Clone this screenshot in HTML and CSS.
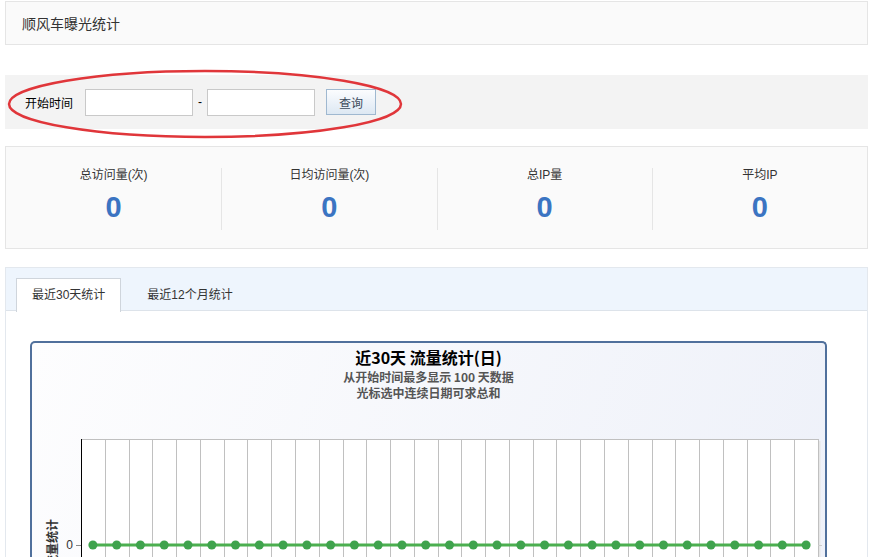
FILE: index.html
```html
<!DOCTYPE html>
<html lang="zh-CN">
<head>
    <meta charset="UTF-8">
    <meta name="viewport" content="width=device-width, initial-scale=1.0">
    <title>顺风车曝光统计</title>
    <link rel="stylesheet" href="styles.css">
</head>
<body>
    <div class="wrap">
        <section class="box-head">
            <h1 class="head-title">顺风车曝光统计</h1>
        </section>

        <section class="search-bar">
            <label class="search-label">开始时间</label>
            <input class="date-input" type="text">
            <span class="dash">-</span>
            <input class="date-input" type="text">
            <button class="btn-search" type="button">查询</button>
            <svg class="mark" width="400" height="72" viewBox="0 0 400 72">
                <ellipse cx="199" cy="35" rx="196" ry="33" fill="none" stroke="#e0363a" stroke-width="2.5"/>
            </svg>
        </section>

        <section class="stats">
            <div class="stat-item">
                <p class="stat-label">总访问量(次)</p>
                <p class="stat-num">0</p>
            </div>
            <div class="stat-item">
                <p class="stat-label">日均访问量(次)</p>
                <p class="stat-num">0</p>
            </div>
            <div class="stat-item">
                <p class="stat-label">总IP量</p>
                <p class="stat-num">0</p>
            </div>
            <div class="stat-item">
                <p class="stat-label">平均IP</p>
                <p class="stat-num">0</p>
            </div>
        </section>

        <section class="tab-panel">
            <ul class="tab-list">
                <li class="tab active">最近30天统计</li>
                <li class="tab">最近12个月统计</li>
            </ul>
            <div class="tab-body">
                <div class="chart-box">
                    <h2 class="chart-title">近30天 流量统计(日)</h2>
                    <p class="chart-sub">从开始时间最多显示 100 天数据</p>
                    <p class="chart-sub">光标选中连续日期可求总和</p>
                    <svg id="chart" class="chart" width="793" height="200"></svg>
                </div>
            </div>
        </section>
    </div>

    <script>
        const svg = document.querySelector("#chart");
        const ns = "http://www.w3.org/2000/svg";
        const plotLeft = 49;
        const plotRight = 786;
        const plotTop = 38;
        const zeroY = 144;
        const count = 31;
        const step = (plotRight - plotLeft) / count;

        function add(tag, attrs) {
            const el = document.createElementNS(ns, tag);
            for (const key in attrs) {
                el.setAttribute(key, attrs[key]);
            }
            svg.appendChild(el);
            return el;
        }

        add("rect", { x: plotLeft, y: plotTop, width: plotRight - plotLeft, height: 200, fill: "#fff" });
        add("line", { x1: plotRight + 1.5, y1: plotTop + 2, x2: plotRight + 1.5, y2: 200, stroke: "#e6e6e6", "stroke-width": 2 });

        for (let i = 1; i < count; i++) {
            const x = Math.round(plotLeft + i * step) + 0.5;
            add("line", { x1: x, y1: plotTop, x2: x, y2: 200, stroke: "#c0c0c0" });
        }

        add("line", { x1: plotLeft, y1: plotTop + 0.5, x2: plotRight, y2: plotTop + 0.5, stroke: "#c0c0c0" });
        add("line", { x1: plotRight + 0.5, y1: plotTop, x2: plotRight + 0.5, y2: 200, stroke: "#c0c0c0" });
        add("line", { x1: plotLeft + 0.5, y1: plotTop, x2: plotLeft + 0.5, y2: 200, stroke: "#000" });
        add("line", { x1: plotLeft - 5, y1: zeroY + 0.5, x2: plotLeft, y2: zeroY + 0.5, stroke: "#888" });
        add("line", { x1: plotRight, y1: zeroY + 0.5, x2: plotRight + 4, y2: zeroY + 0.5, stroke: "#ccc" });

        const zero = add("text", { x: 41, y: zeroY + 4, "text-anchor": "end", class: "axis-text" });
        zero.textContent = "0";
        const yTitle = add("text", { x: 0, y: 0, "text-anchor": "middle", class: "axis-title", transform: "translate(25 142) rotate(-90)" });
        yTitle.textContent = "流量统计";

        const points = [];
        for (let i = 0; i < count; i++) {
            points.push((plotLeft + (i + 0.5) * step).toFixed(1) + "," + zeroY);
        }
        add("polyline", { points: points.join(" "), fill: "none", stroke: "#4caf50", "stroke-width": 3 });
        points.forEach((p) => {
            const [x, y] = p.split(",");
            add("circle", { cx: x, cy: y, r: 4.5, fill: "#3fa34d" });
        });
    </script>
</body>
</html>
```

FILE: styles.css
```css
body {
    margin: 0;
    background-color: #fff;
    font-family: "Liberation Sans", "Noto Sans CJK SC", sans-serif;
    font-size: 12px;
    color: #333;
}

p, h1, h2, ul {
    margin: 0;
    padding: 0;
}

.wrap {
    width: 863px;
    padding: 1px 0 0 5px;
}

.box-head {
    height: 42px;
    background-color: #fafafa;
    border: 1px solid #e5e5e5;
}

.head-title {
    padding-left: 16px;
    font-size: 14px;
    font-weight: normal;
    line-height: 44px;
    color: #333;
}

.search-bar {
    position: relative;
    display: flex;
    align-items: center;
    height: 54px;
    margin-top: 30px;
    padding-left: 20px;
    background-color: #f3f3f3;
}

.search-label {
    margin-right: 12px;
    color: #000;
}

.date-input {
    box-sizing: border-box;
    width: 108px;
    height: 27px;
    margin: 0;
    background-color: #fff;
    border: 1px solid #c9c9c9;
}

.dash {
    width: 14px;
    text-align: center;
    color: #000;
}

.btn-search {
    box-sizing: border-box;
    width: 50px;
    height: 26px;
    margin-left: 11px;
    background: linear-gradient(#fbfcfe, #dde8f3);
    border: 1px solid #9fb8d0;
    font-family: "Noto Sans CJK SC", sans-serif;
    font-size: 12px;
    color: #3d4b5c;
}

.mark {
    position: absolute;
    left: 1px;
    top: -6px;
    overflow: visible;
    pointer-events: none;
}

.stats {
    display: grid;
    grid-template-columns: repeat(4, 1fr);
    margin-top: 17px;
    padding: 21px 0 18px 0;
    background-color: #fafafa;
    border: 1px solid #e5e5e5;
}

.stat-item {
    height: 62px;
    text-align: center;
}

.stat-item + .stat-item {
    border-left: 1px solid #e5e5e5;
}

.stat-label {
    line-height: 14px;
    margin-top: 0;
}

.stat-num {
    margin-top: 9px;
    font-size: 29px;
    font-weight: bold;
    line-height: 32px;
    color: #3b74c2;
}

.tab-panel {
    height: 290px;
    margin-top: 18px;
    border: 1px solid #e3e8ee;
    border-bottom: 0;
    overflow: hidden;
}

.tab-list {
    display: flex;
    height: 32px;
    padding: 10px 0 0 10px;
    list-style: none;
    background-color: #eef5fd;
    border-bottom: 1px solid #dde3ea;
}

.tab {
    height: 32px;
    padding: 0 15px;
    line-height: 32px;
    margin-right: 10px;
    border: 1px solid transparent;
    border-bottom: 0;
}

.tab.active {
    height: 33px;
    margin-bottom: -1px;
    background-color: #fff;
    border-color: #cfd5dc;
}

.tab-body {
    padding: 30px 0 0 24px;
}

.chart-box {
    width: 793px;
    height: 214px;
    background: linear-gradient(110deg, #fdfdfe, #eef1f9);
    border: 2px solid #50709c;
    border-bottom: 0;
    border-radius: 5px 5px 0 0;
    text-align: center;
    overflow: hidden;
}

.chart-title {
    padding-top: 2px;
    font-family: "Noto Sans CJK SC", sans-serif;
    font-size: 16px;
    line-height: 24px;
    color: #000;
}

.chart-sub {
    font-family: "Noto Sans CJK SC", sans-serif;
    font-weight: bold;
    line-height: 16px;
    color: #555;
}

.chart {
    display: block;
}

.axis-text {
    font-family: "Liberation Sans", sans-serif;
    font-size: 12px;
    fill: #333;
}

.axis-title {
    font-family: "Noto Sans CJK SC", sans-serif;
    font-size: 12px;
    font-weight: bold;
    fill: #333;
}
```
